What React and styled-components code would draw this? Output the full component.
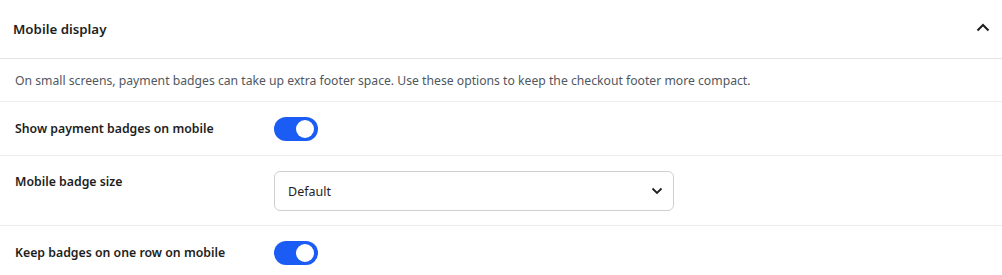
import React from "react";
import styled, { createGlobalStyle } from "styled-components";

const Global = createGlobalStyle`
  html, body { margin: 0; padding: 0; background: #fff; }
  body { font-family: "Noto Sans", "Open Sans", sans-serif; color: #1e1e1e; }
  * { box-sizing: border-box; }
`;

const Panel = styled.section`
  width: 1002px;
  background: #fff;
`;

const Header = styled.div`
  height: 59px;
  display: flex;
  align-items: center;
  justify-content: space-between;
  padding: 0 11px 1px 13px;
  border-bottom: 1px solid #e4e4e4;
`;

const Title = styled.h2`
  margin: 0;
  font-size: 13.3px;
  font-weight: 600;
  color: #1e1e1e;
`;

const Chevron = styled.button`
  border: 0;
  background: none;
  padding: 0;
  width: 16px;
  height: 16px;
  display: flex;
  align-items: center;
  justify-content: center;
  color: #1e1e1e;
  margin-top: -2px;
`;

const Description = styled.p`
  margin: 0;
  padding: 13px 15px 11px;
  font-size: 12.2px;
  line-height: 18px;
  color: #50575e;
  border-bottom: 1px solid #ececec;
`;

const Row = styled.div`
  display: grid;
  grid-template-columns: 259px 400px;
  align-items: ${(p) => (p.$top ? "start" : "center")};
  padding: 15px 15px 14px;
  border-bottom: ${(p) => (p.$last ? "none" : "1px solid #ececec")};
`;

const Label = styled.label`
  font-size: 12.3px;
  font-weight: 600;
  color: #1e1e1e;
  line-height: 18px;
  padding-top: ${(p) => (p.$top ? "2px" : "0")};
`;

const Track = styled.span`
  display: inline-flex;
  align-items: center;
  justify-content: ${(p) => (p.$on ? "flex-end" : "flex-start")};
  width: 44px;
  height: 24px;
  border-radius: 12px;
  background: ${(p) => (p.$on ? "#1a5cf4" : "#ccc")};
  padding: 0 4px;
`;

const Knob = styled.span`
  width: 18px;
  height: 18px;
  border-radius: 50%;
  background: #fff;
`;

const Select = styled.div`
  height: 40px;
  width: 400px;
  border: 1px solid #cfcfcf;
  border-radius: 6px;
  display: flex;
  align-items: center;
  justify-content: space-between;
  padding: 0 10px 0 13px;
  font-size: 12.5px;
  color: #1e1e1e;
`;

const Toggle = ({ on }) => (
  <Track $on={on}>
    <Knob />
  </Track>
);

export default function App() {
  return (
    <>
      <Global />
      <Panel>
        <Header>
          <Title>Mobile display</Title>
          <Chevron aria-label="Collapse">
            <svg width="14" height="9" viewBox="0 0 14 9" fill="none">
              <path d="M1.5 7.5 L7 2 L12.5 7.5" stroke="#1e1e1e" strokeWidth="2" />
            </svg>
          </Chevron>
        </Header>
        <Description>
          On small screens, payment badges can take up extra footer space. Use these options to keep the checkout footer more compact.
        </Description>
        <Row>
          <Label>Show payment badges on mobile</Label>
          <Toggle on />
        </Row>
        <Row $top>
          <Label $top>Mobile badge size</Label>
          <Select>
            <span>Default</span>
            <svg width="12" height="8" viewBox="0 0 12 8" fill="none">
              <path d="M1.5 1.5 L6 6 L10.5 1.5" stroke="#1e1e1e" strokeWidth="1.8" />
            </svg>
          </Select>
        </Row>
        <Row $last>
          <Label>Keep badges on one row on mobile</Label>
          <Toggle on />
        </Row>
      </Panel>
    </>
  );
}
